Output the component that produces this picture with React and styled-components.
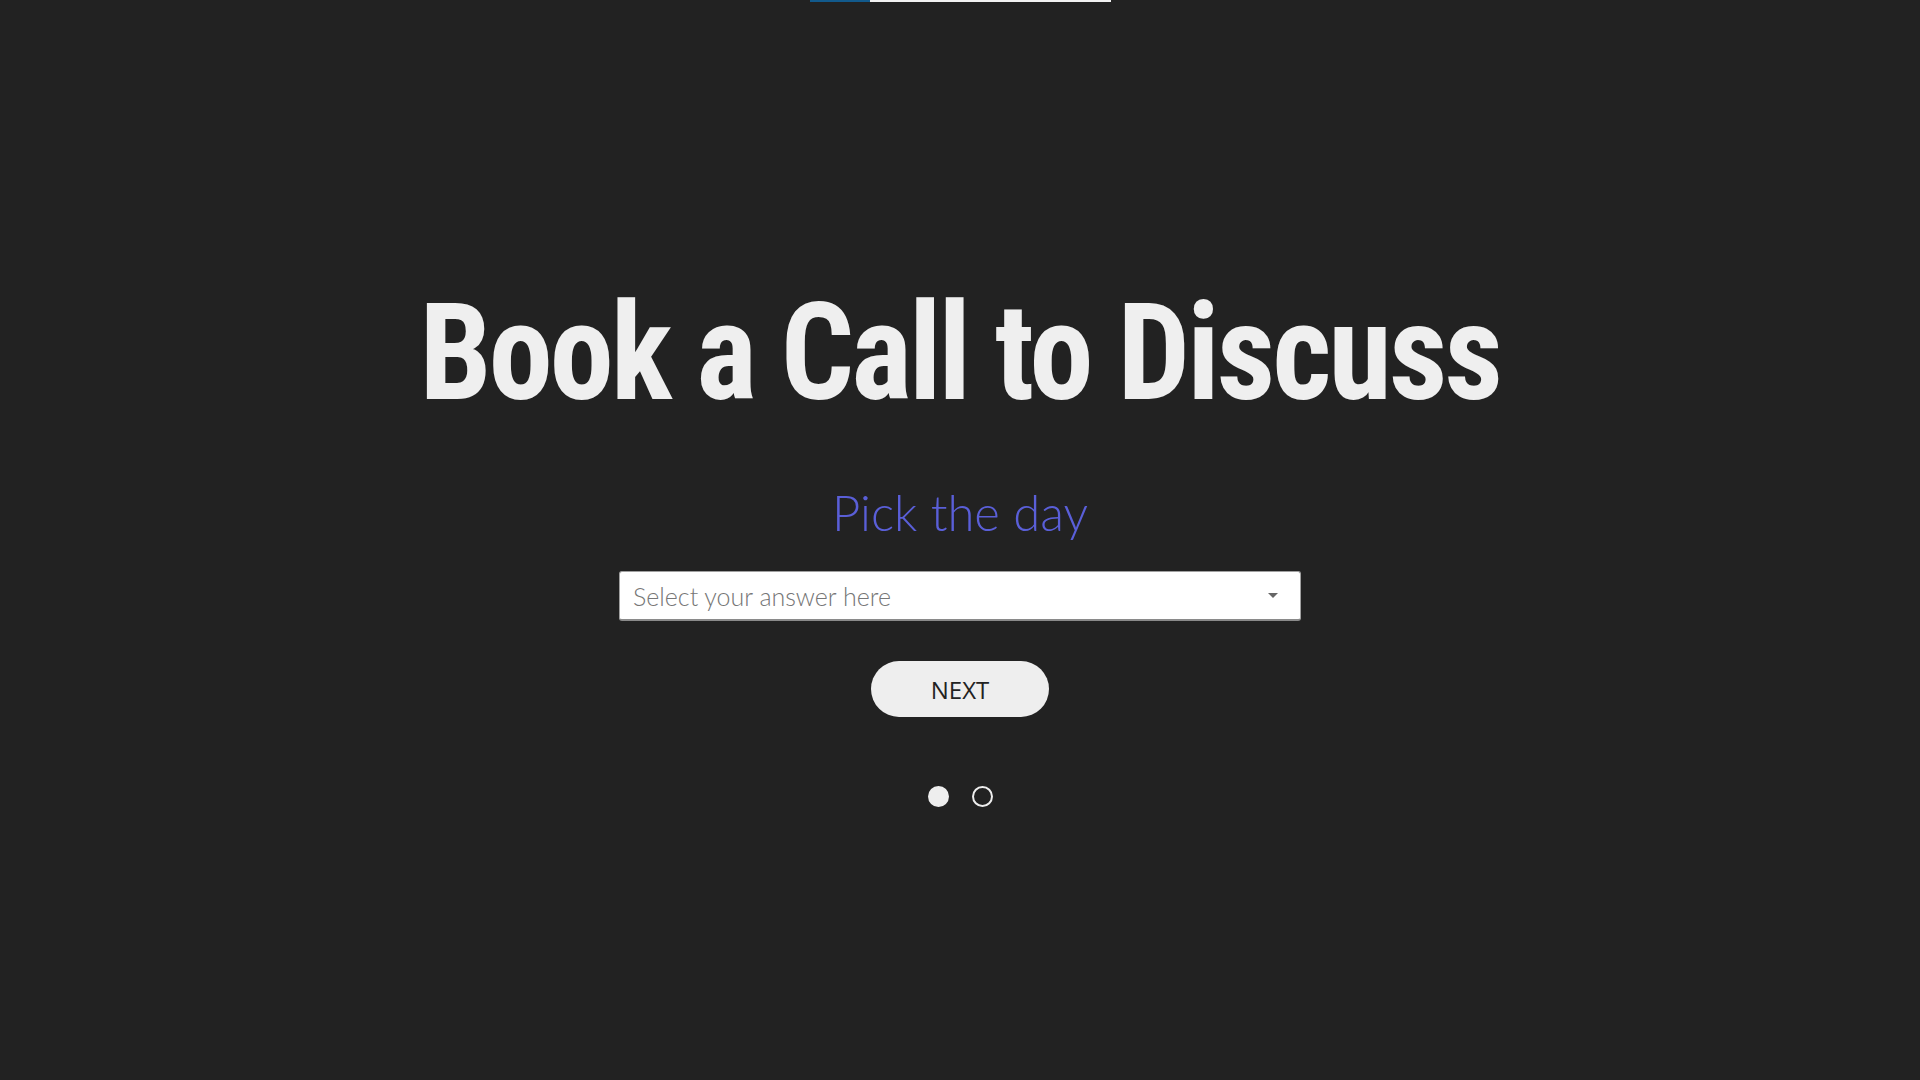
import React from "react";
import styled, { createGlobalStyle } from "styled-components";

const GlobalStyle = createGlobalStyle`
    html, body {
        margin: 0;
        padding: 0;
        background: #222222;
    }
    * {
        box-sizing: border-box;
    }
`;

const App = () => {
    return (
        <>
            <GlobalStyle />
            <Page>
                <ProgressTrack>
                    <ProgressFill />
                </ProgressTrack>
                <Heading>Book a Call to Discuss</Heading>
                <Question>Pick the day</Question>
                <SelectBox>
                    <Placeholder>Select your answer here</Placeholder>
                    <Caret />
                </SelectBox>
                <NextButton type="button">NEXT</NextButton>
                <Dots>
                    <Dot active />
                    <Dot />
                </Dots>
            </Page>
        </>
    );
};

const Page = styled.main`
    min-height: 100vh;
    display: flex;
    flex-direction: column;
    align-items: center;
    background: #222222;
`;

const ProgressTrack = styled.div`
    width: 301px;
    height: 2px;
    background: #f2f2f2;
    display: flex;
`;

const ProgressFill = styled.div`
    width: 60px;
    height: 100%;
    background: #125a8c;
`;

const Heading = styled.h1`
    margin: 283px 0 0;
    font-family: Roboto, "Liberation Sans", sans-serif;
    font-weight: 700;
    font-stretch: 75%;
    font-size: 136px;
    line-height: 1;
    letter-spacing: -3px;
    transform: scaleX(0.945);
    color: #efefef;
`;

const Question = styled.h2`
    margin: 61px 0 0;
    font-family: Lato, "Open Sans", sans-serif;
    font-weight: 300;
    font-size: 49px;
    line-height: 60px;
    color: #5a5fd8;
`;

const SelectBox = styled.div`
    margin-top: 29px;
    width: 682px;
    height: 50px;
    background: #ffffff;
    border: 1px solid #a0a0a0;
    border-bottom: 2px solid #8a8a8a;
    border-radius: 3px;
    display: flex;
    align-items: center;
    justify-content: space-between;
    padding: 0 22px 0 13px;
`;

const Placeholder = styled.span`
    font-family: Lato, "Open Sans", sans-serif;
    font-weight: 300;
    font-size: 25px;
    color: #767676;
`;

const Caret = styled.span`
    width: 0;
    height: 0;
    border-left: 5px solid transparent;
    border-right: 5px solid transparent;
    border-top: 5px solid #666666;
`;

const NextButton = styled.button`
    margin-top: 40px;
    width: 178px;
    height: 56px;
    border: none;
    border-radius: 28px;
    background: #eeeeee;
    color: #222222;
    font-family: "Open Sans", sans-serif;
    font-size: 24px;
    cursor: pointer;
`;

const Dots = styled.div`
    margin-top: 69px;
    display: flex;
    gap: 23px;
`;

const Dot = styled.span`
    width: 21px;
    height: 21px;
    border-radius: 50%;
    border: 2px solid #eeeeee;
    background: ${(props) => (props.active ? "#eeeeee" : "transparent")};
`;

export default App;
